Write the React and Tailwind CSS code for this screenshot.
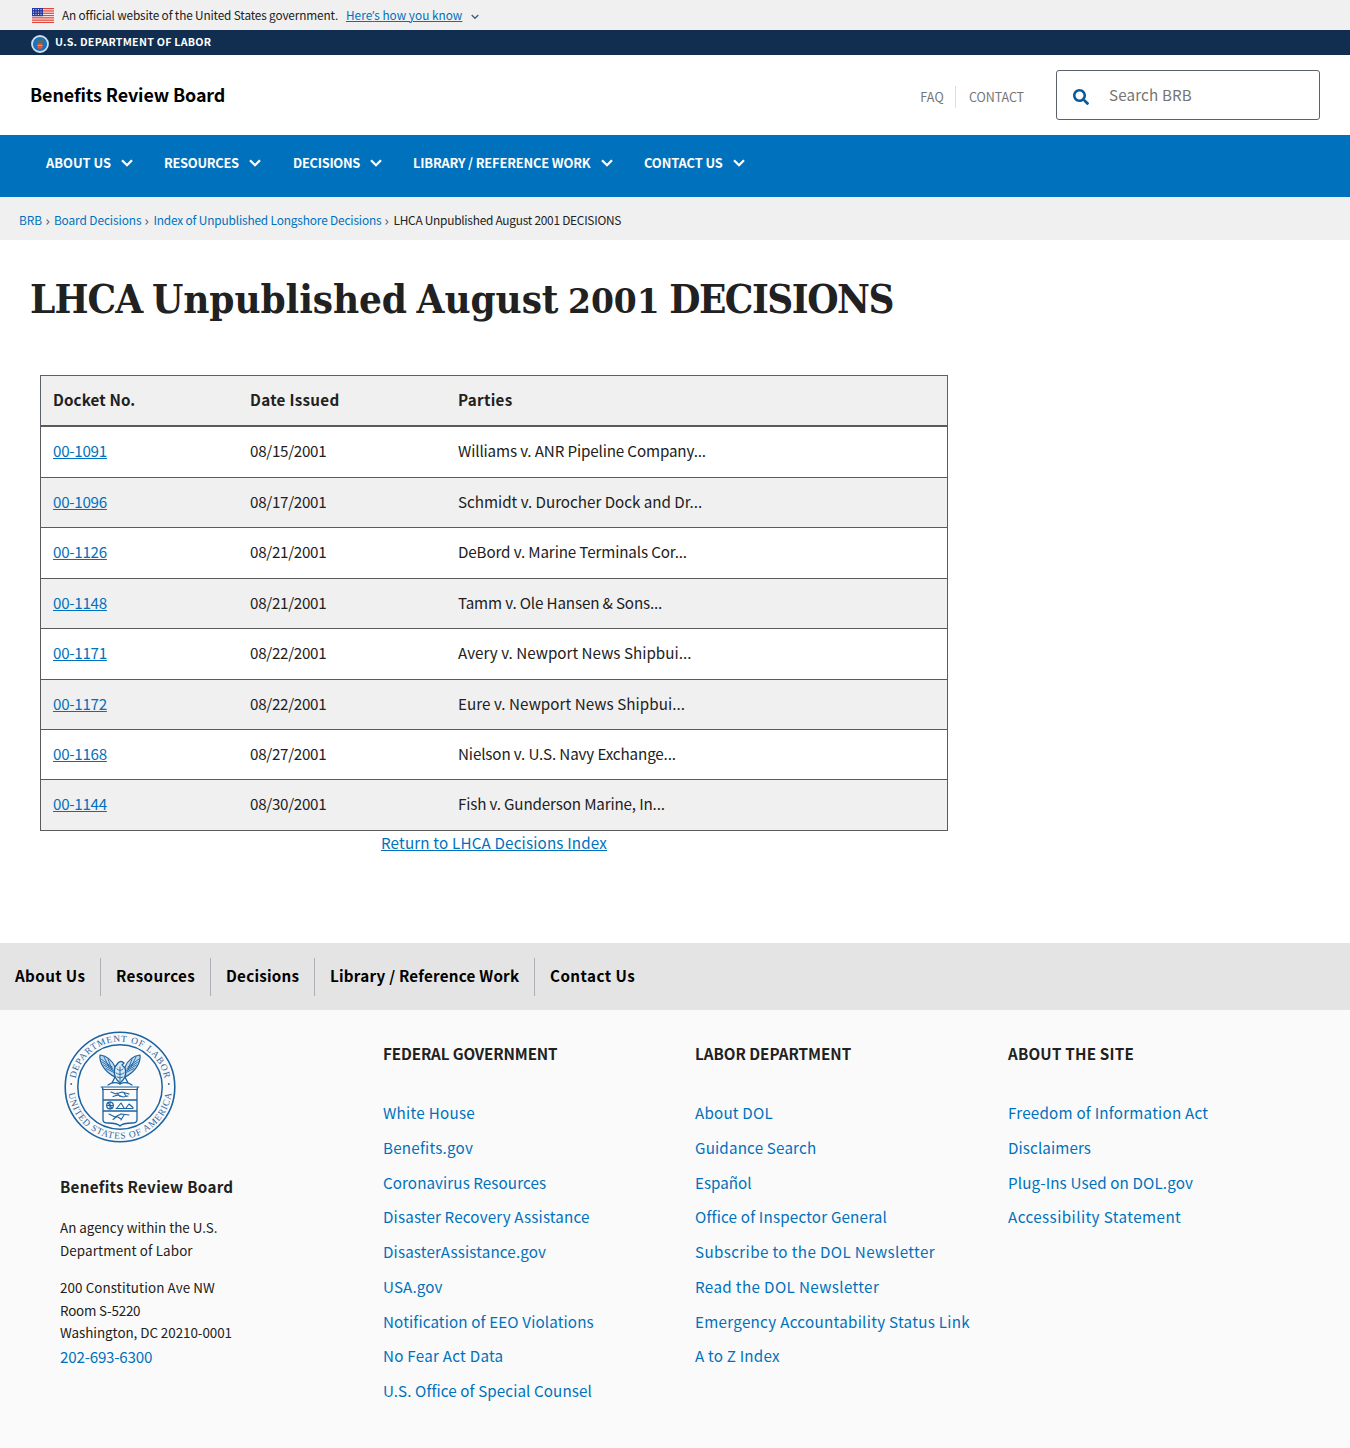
import React from "react";
import { FaSearch } from "react-icons/fa";

const rows = [
  ["00-1091", "08/15/2001", "Williams v. ANR Pipeline Company...", "h-[51px] bg-white", "tracking-[-0.14px]"],
  ["00-1096", "08/17/2001", "Schmidt v. Durocher Dock and Dr...", "h-[50px] bg-[#f0f0f0]", "tracking-[-0.02px]"],
  ["00-1126", "08/21/2001", "DeBord v. Marine Terminals Cor...", "h-[51px] bg-white", "tracking-[-0.13px]"],
  ["00-1148", "08/21/2001", "Tamm v. Ole Hansen & Sons...", "h-[50px] bg-[#f0f0f0]", "tracking-[-0.15px]"],
  ["00-1171", "08/22/2001", "Avery v. Newport News Shipbui...", "h-[51px] bg-white", "tracking-[0.02px]"],
  ["00-1172", "08/22/2001", "Eure v. Newport News Shipbui...", "h-[50px] bg-[#f0f0f0]", "tracking-[0.05px]"],
  ["00-1168", "08/27/2001", "Nielson v. U.S. Navy Exchange...", "h-[50px] bg-white", "tracking-[-0.13px]"],
  ["00-1144", "08/30/2001", "Fish v. Gunderson Marine, In...", "h-[51px] bg-[#f0f0f0]", "tracking-[-0.15px]"],
];

const nav = [
  ["ABOUT US", "w-[118px]"],
  ["RESOURCES", "w-[129px] tracking-[-0.3px]"],
  ["DECISIONS", "w-[120px] tracking-[-0.3px]"],
  ["LIBRARY / REFERENCE WORK", "w-[231px] tracking-[-0.17px]"],
  ["CONTACT US", "w-[120px] tracking-[-0.12px]"],
];

const footerNav = [
  ["About Us", "w-[101px] tracking-[0.38px]"],
  ["Resources", "w-[110px] tracking-[0.34px]"],
  ["Decisions", "w-[104px] tracking-[0.24px]"],
  ["Library / Reference Work", "w-[220px] tracking-[0.23px]"],
  ["Contact Us", "w-[120px] tracking-[0.45px]"],
];

const columns = [
  ["FEDERAL GOVERNMENT", "w-[312px]", "tracking-[-0.12px]", [
    ["White House", "tracking-[0.27px]"],
    ["Benefits.gov", "tracking-[0.22px]"],
    ["Coronavirus Resources", "tracking-[0.08px]"],
    ["Disaster Recovery Assistance", "tracking-[0.15px]"],
    ["DisasterAssistance.gov", "tracking-[0.14px]"],
    ["USA.gov", "tracking-[0.14px]"],
    ["Notification of EEO Violations", "tracking-[0.13px]"],
    ["No Fear Act Data", "tracking-[0.25px]"],
    ["U.S. Office of Special Counsel", "tracking-[0.1px]"],
  ]],
  ["LABOR DEPARTMENT", "w-[313px]", "tracking-normal", [
    ["About DOL", "tracking-[0.2px]"],
    ["Guidance Search", "tracking-[0.17px]"],
    ["Español", "tracking-normal"],
    ["Office of Inspector General", "tracking-[0.18px]"],
    ["Subscribe to the DOL Newsletter", "tracking-[0.37px]"],
    ["Read the DOL Newsletter", "tracking-[0.37px]"],
    ["Emergency Accountability Status Link", "tracking-[0.28px]"],
    ["A to Z Index", "tracking-[0.2px]"],
  ]],
  ["ABOUT THE SITE", "w-[312px]", "tracking-[0.2px]", [
    ["Freedom of Information Act", "tracking-[0.22px]"],
    ["Disclaimers", "tracking-[0.1px]"],
    ["Plug-Ins Used on DOL.gov", "tracking-[0.13px]"],
    ["Accessibility Statement", "tracking-[0.42px]"],
  ]],
];

const crumbs = [
  ["BRB", "tracking-[-0.1px]"],
  ["Board Decisions", "tracking-[-0.1px]"],
  ["Index of Unpublished Longshore Decisions", "tracking-[-0.17px]"],
];

function Flag() {
  return (
    <svg width="22" height="15" viewBox="0 0 22 15" className="shrink-0">
      <rect width="22" height="15" fill="#fff" />
      {[0, 2.3, 4.6, 6.9, 9.2, 11.5, 13.8].map((y) => (
        <rect key={y} y={y} width="22" height="1.3" fill="#e0453a" />
      ))}
      <rect width="11" height="8.2" fill="#2a3b9d" />
      {[1.5, 4, 6.5].map((y) =>
        [1.5, 4, 6.5, 9].map((x) => <circle key={x + "-" + y} cx={x} cy={y} r="0.55" fill="#fff" />)
      )}
    </svg>
  );
}

function SmallSeal() {
  return (
    <svg width="18" height="18" viewBox="0 0 18 18" className="shrink-0">
      <circle cx="9" cy="9" r="8" fill="#1a72bd" stroke="#cddfee" strokeWidth="1.8" />
      <path d="M5.500 4L8 5.800L9 4.300L10 5.800L12.500 4L11.500 8L9 9.500L6.500 8Z" fill="#5f6b5a" />
      <path d="M6.500 8.500H11.500V13L9 14.300L6.500 13Z" fill="#e2562f" />
      <path d="M6.500 10.500H11.500" stroke="#e9a36a" strokeWidth=".8" />
    </svg>
  );
}

function Wing() {
  return (
    <>
      <path d="M-20-32C-21-24-15-15-5-10L-5-20C-8-27-13-31-20-32Z" fill="#c3dbee" strokeWidth="1.2" />
      <path d="M-19-28L-8-20M-18-25L-7-18M-16.500-22L-6-16M-14-18.500L-5-14M-16-30L-11-20M-12-28L-8-17" strokeWidth=".9" />
      <path d="M-5-10L-8-4M-12-2Q-6-6 0-3" strokeWidth="1.3" />
    </>
  );
}

function Seal() {
  return (
    <svg width="112" height="112" viewBox="-56 -56 112 112" fill="none" stroke="#1c62a0" className="block">
      <circle r="54.8" strokeWidth="1.6" />
      <circle r="42.2" strokeWidth="1.5" />
      <defs>
        <path id="sealTop" d="M-45.300 0A45.300 45.300 0 0 1 45.300 0" />
        <path id="sealBottom" d="M-51.800 0A51.800 51.800 0 0 0 51.800 0" />
      </defs>
      <g fill="#2f659b" stroke="none" fontFamily="'Liberation Serif', serif" fontSize="9.4" textAnchor="middle">
        <text><textPath href="#sealTop" startOffset="50%" textLength="125">DEPARTMENT OF LABOR</textPath></text>
        <text><textPath href="#sealBottom" startOffset="50%" textLength="150">UNITED STATES OF AMERICA</textPath></text>
        <circle cx="-48.800" cy="-3" r=".9" />
        <circle cx="48.800" cy="-3" r=".9" />
      </g>
      <g strokeLinejoin="round" strokeLinecap="round">
        <Wing />
        <g transform="scale(-1 1)"><Wing /></g>
        <path d="M-5-20L-2-24Q1-27 4-24L2-22L5-19Q7-12 3-7L0-4L-3-7Q-7-12-5-20Z" fill="#dbe9f4" strokeWidth="1.3" />
        <path d="M-3-18Q0-15 3-18M-4-14Q0-11 4-14M-3-10Q0-8 3-10M0-20V-6" strokeWidth=".9" />
        <path d="M-19 0H19M-17.500 0V2.500H17.500V0" strokeWidth="1.1" />
        <path d="M-17 2V33Q-17 36-12 36Q-3 36 0 39Q3 36 12 36Q17 36 17 33V2M-17 13H17M-17 24H17" strokeWidth="1.3" />
        <path d="M-9 5L-4 7L2 5L9 7M-7 9.500L-2 8L3 10L8 9M-3 6L0 9.500M4 6L6 9" strokeWidth="1.1" />
        <circle cx="-10" cy="18.500" r="3.300" strokeWidth="1.2" />
        <path d="M-10 15V22M-13 18.500H-7M-12 16L-8 21M-4 21.500H13M-3 21L1 16L4 21M6 21L9 17L13 20.500M-11 27L-5 30L1 27L9 28M-7 32.500L-3 29.500L1 32M4 28L1 33" strokeWidth="1.1" />
      </g>
    </svg>
  );
}

export default function App() {
  return (
    <div className="h-[1448px] w-[1350px] overflow-hidden bg-white font-['Noto_Sans_CJK_SC','Source_Sans_Pro',sans-serif] text-[15.2px] leading-6 text-[#212121]">
      <div className="flex h-[30px] items-center bg-[#f0f0f0] pl-8 text-[11.8px] leading-none">
        <Flag />
        <span className="ml-2 w-[284px] tracking-[-0.14px] whitespace-nowrap">An official website of the United States government.</span>
        <a className="tracking-[0.02px] whitespace-nowrap text-[#0071bc] underline">Here<span className="font-['Open_Sans']">’</span>s how you know</a>
        <svg width="8" height="6" viewBox="0 0 8 6" className="mt-1 ml-[9px]" fill="none" stroke="#3d6078" strokeWidth="1.3"><path d="M.7 1L4 4.300L7.300 1" /></svg>
      </div>
      <div className="flex h-[25px] items-center bg-[#112e51] pl-[31px] text-[10.7px] leading-none font-bold text-white">
        <div className="mt-[3px]"><SmallSeal /></div>
        <span className="mb-px ml-1.5 tracking-[0.24px] whitespace-nowrap">U.S. DEPARTMENT OF LABOR</span>
      </div>

      <header className="flex h-20 items-center px-[30px]">
        <h1 className="mb-0.5 flex-1 text-[17.9px] font-bold tracking-[-0.1px] text-black">Benefits Review Board</h1>
        <div className="mt-1 flex items-center text-[12.5px] text-[#757575]">
          <a className="flex h-[22px] items-center border-r border-[#dcdee0] pr-[11px] tracking-[0.2px]">FAQ</a>
          <a className="w-[100px] pl-[13px] tracking-[-0.08px]">CONTACT</a>
        </div>
        <div className="flex h-[50px] w-[264px] items-center rounded-[3px] border border-[#5b616b] pl-4 text-[#757575]">
          <FaSearch className="mt-1 mr-5 size-4 text-[#0b5a97]" />
          <span className="mb-0.5 tracking-[0.15px]">Search BRB</span>
        </div>
      </header>

      <nav className="flex h-[62px] items-start bg-[#0071bc] pt-[17px] pl-[46px] text-[12.9px] leading-[22px] font-bold text-white">
        {nav.map(([t, w]) => (
          <a key={t} className={"flex items-center whitespace-nowrap " + w}>
            {t}
            <svg width="12" height="8" viewBox="0 0 12 8" className="ml-2.5" fill="none" stroke="#fff" strokeWidth="2.3"><path d="M1 1.200L6 6.200L11 1.200" /></svg>
          </a>
        ))}
      </nav>

      <div className="flex h-[43px] items-center bg-[#f0f0f0] pt-0.5 pl-[19px] text-[11.9px] leading-none whitespace-nowrap">
        {crumbs.map(([t, c]) => (
          <React.Fragment key={t}>
            <a className={"text-[#0071bc] " + c}>{t}</a>
            <svg width="4" height="6" viewBox="0 0 4 6" className="mx-1 mt-[5px]" fill="none" stroke="#757575" strokeWidth="1.1"><path d="M.6.5L3 3L.6 5.500" /></svg>
          </React.Fragment>
        ))}
        <span className="tracking-[-0.26px]">LHCA Unpublished August 2001 DECISIONS</span>
      </div>

      <main className="h-[703px] pt-[32px] pl-[30px]">
        <h2 className="h-[103px] font-['DejaVu_Serif_Condensed','DejaVu_Serif',serif] text-[40px] leading-[54px] font-bold tracking-[-0.08px] [word-spacing:-2.8px] whitespace-nowrap">
          <span className="tracking-[-0.9px]">LHCA</span> Unpublished August <span className="font-['DejaVu_Serif',serif] text-[33px]">2001</span> <span className="tracking-[-1.5px]">DECISIONS</span>
        </h2>
        <div className="ml-[10px] w-[908px]">
          <div className="grid h-[52px] grid-cols-[197px_208px_1fr] items-center border border-b-2 border-[#5b616b] border-b-[#5b5b5b] bg-[#f0f0f0] pb-[3px] pl-3 font-bold tracking-[0.3px]">
            <span className="tracking-[0.12px]">Docket No.</span><span>Date Issued</span><span>Parties</span>
          </div>
          {rows.map(([n, d, p, c, t]) => (
            <div key={n} className={"grid grid-cols-[197px_208px_1fr] items-center border border-t-0 border-[#5b5b5b] pb-1 pl-3 " + c}>
              <a className="justify-self-start tracking-[-0.28px] text-[#0071bc] underline">{n}</a>
              <span className="tracking-[-0.3px]">{d}</span>
              <span className={t}>{p}</span>
            </div>
          ))}
          <div className="-mt-px text-center tracking-[0.17px]"><a className="text-[#0071bc] underline">Return to LHCA Decisions Index</a></div>
        </div>
      </main>

      <div className="flex h-[67px] items-center bg-[#e4e4e4] font-bold text-black">
        {footerNav.map(([t, w], i) => (
          <a key={t} className={"flex h-[38px] items-center pb-[3px] pl-[15px] whitespace-nowrap " + (i < 4 ? "border-r border-[#aeb0b5] " : "") + w}>{t}</a>
        ))}
      </div>

      <footer className="flex h-[438px] bg-[#fafafa]">
        <div className="w-[383px] pt-[21px] pl-[60px]">
          <div className="ml-1"><Seal /></div>
          <h3 className="mt-[31px] font-bold tracking-[0.28px]">Benefits Review Board</h3>
          <p className="mt-[18px] text-[13.4px] leading-[22.5px]">An agency within the U.S.<br /><span className="tracking-[0.12px]">Department of Labor</span></p>
          <p className="mt-[15px] text-[13.4px] leading-[22.5px]"><span className="tracking-[0.09px]">200 Constitution Ave NW</span><br /><span className="tracking-[-0.2px]">Room S-5220</span><br /><span className="tracking-[-0.04px]">Washington, DC 20210-0001</span></p>
          <a className="block tracking-[-0.22px] text-[#0071bc]">202-693-6300</a>
        </div>
        {columns.map(([h, w, ht, links]) => (
          <div key={h} className={"pt-[31px] whitespace-nowrap " + w}>
            <h3 className={"font-bold " + ht}>{h}</h3>
            <ul className="mt-[30px] text-[#0071bc]">
              {links.map(([l, t]) => <li key={l} className={"h-[34.75px] leading-[34.75px] " + t}>{l}</li>)}
            </ul>
          </div>
        ))}
      </footer>
    </div>
  );
}
